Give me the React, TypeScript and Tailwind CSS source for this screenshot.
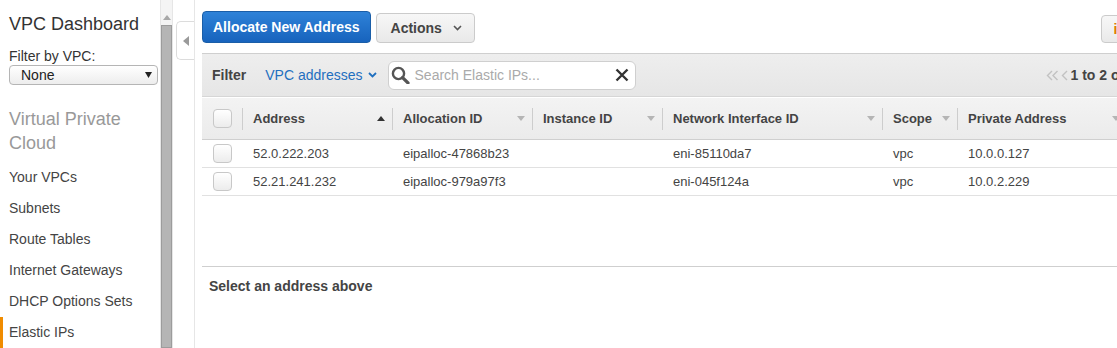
import React from 'react';

const navItems = [
    'Your VPCs',
    'Subnets',
    'Route Tables',
    'Internet Gateways',
    'DHCP Options Sets',
    'Elastic IPs',
];

const columns = [
    {label: 'Address', sorted: true},
    {label: 'Allocation ID'},
    {label: 'Instance ID'},
    {label: 'Network Interface ID'},
    {label: 'Scope'},
    {label: 'Private Address'},
];

const rows = [
    ['52.0.222.203', 'eipalloc-47868b23', '', 'eni-85110da7', 'vpc', '10.0.0.127'],
    ['52.21.241.232', 'eipalloc-979a97f3', '', 'eni-045f124a', 'vpc', '10.0.2.229'],
];

const gridCols = 'grid grid-cols-[40px_150px_140px_130px_220px_75px_170px]';

const Checkbox = () => (
    <div className="h-[19px] w-[19px] rounded-[4px] border border-[#c8c8c8] bg-gradient-to-b from-white to-[#ececec]"/>
);

const SortArrow = ({active}: { active?: boolean }) => (
    <svg width="8" height="5" viewBox="0 0 8 5" className="shrink-0">
        {active
            ? <path d="M0 5 L4 0 L8 5 Z" fill="#333"/>
            : <path d="M0 0 L8 0 L4 5 Z" fill="#b5b5b5"/>}
    </svg>
);

const Sidebar = () => (
    <div className="w-[160px] shrink-0 pt-[13px] text-[#444]">
        <div className="px-[9px] text-[18px] leading-[22px] text-[#333]">VPC Dashboard</div>
        <div className="mt-[12px] px-[9px] text-[14px] leading-[18px] text-[#333]">Filter by VPC:</div>
        <div className="ml-[9px] mr-[2px] flex h-[20px] items-center justify-between rounded-[4px] border border-[#b5b5b5] bg-gradient-to-b from-white to-[#ededed] pl-[11px] pr-[5px] text-[14px] text-[#222]">
            <span>None</span>
            <svg width="7" height="6" viewBox="0 0 7 6">
                <path d="M0 0 L7 0 L3.5 6 Z" fill="#222"/>
            </svg>
        </div>
        <div className="mt-[22px] px-[9px] text-[18px] leading-[24px] text-[#999]">
            Virtual Private<br/>Cloud
        </div>
        <div className="mt-[7px] flex flex-col">
            {navItems.map((item) => (
                <div key={item}
                     className={item === 'Elastic IPs'
                         ? 'h-[31px] border-l-[3px] border-[#f08c00] pl-[6px] text-[14px] leading-[31px]'
                         : 'h-[31px] pl-[9px] text-[14px] leading-[31px]'}>
                    {item}
                </div>
            ))}
        </div>
    </div>
);

const Scrollbar = () => (
    <div className="flex w-[13px] shrink-0 flex-col items-center border-x border-[#e6e6e6] bg-[#f4f4f4]">
        <svg width="8" height="5" viewBox="0 0 8 5" className="mt-[15px]">
            <path d="M0 5 L4 0 L8 5 Z" fill="#a8a8a8"/>
        </svg>
        <div className="mt-[5px] w-[11px] flex-1 border border-[#9c9c9c] bg-[#b5b5b5]"/>
    </div>
);

const CollapseTab = () => (
    <div className="w-[21px] shrink-0 pl-[3px] pt-[21px]">
        <div className="flex h-[39px] w-[18px] items-center justify-center rounded-l-[5px] border border-r-0 border-[#dcdcdc] bg-white">
            <svg width="6" height="10" viewBox="0 0 6 10">
                <path d="M6 0 L6 10 L0 5 Z" fill="#9a9a9a"/>
            </svg>
        </div>
    </div>
);

const Toolbar = () => (
    <div className="flex items-end pt-[11px]">
        <button className="h-[32px] rounded-[4px] border border-[#1a5ea8] bg-gradient-to-b from-[#2e82d8] to-[#1763bd] px-[10px] text-[14px] font-bold text-white">
            Allocate New Address
        </button>
        <button className="ml-[5px] flex h-[30px] w-[99px] items-center rounded-[4px] border border-[#cbcbcb] bg-gradient-to-b from-[#f7f7f7] to-[#e9e9e9] pl-[14px] text-[14px] font-bold text-[#444]">
            Actions
            <svg width="9" height="6" viewBox="0 0 9 6" className="ml-[11px]">
                <path d="M1 1 L4.5 4.5 L8 1" stroke="#555" strokeWidth="1.6" fill="none"/>
            </svg>
        </button>
        <button className="ml-[626px] flex h-[28px] w-[40px] items-center rounded-[4px] border border-[#cbcbcb] bg-gradient-to-b from-[#f7f7f7] to-[#e9e9e9] pl-[12px]">
            <span className="text-[14px] font-bold text-[#e07b00]">i</span>
        </button>
    </div>
);

const FilterBar = () => (
    <div className="mt-[10px] flex h-[44px] items-center border-y border-t-[#cfcfcf] border-b-[#d6d6d6] bg-gradient-to-b from-[#eeeeee] to-[#e6e6e6] pl-[10px] text-[14px]">
        <span className="font-bold text-[#444]">Filter</span>
        <span className="ml-[19px] flex items-center text-[#1f6fbf]">
            VPC addresses
            <svg width="9" height="6" viewBox="0 0 9 6" className="ml-[5px]">
                <path d="M1 1 L4.5 4.5 L8 1" stroke="#1f6fbf" strokeWidth="1.8" fill="none"/>
            </svg>
        </span>
        <div className="ml-[11px] flex h-[29px] w-[248px] items-center rounded-[6px] border border-[#cfcfcf] bg-white pl-[2px] pr-[6px]">
            <svg width="19" height="18" viewBox="0 0 19 18">
                <circle cx="7.5" cy="7.5" r="5.6" stroke="#555" strokeWidth="2.4" fill="none"/>
                <path d="M11.6 11.6 L17 17" stroke="#555" strokeWidth="3.2" strokeLinecap="round"/>
            </svg>
            <span className="ml-[5px] flex-1 text-[#aaa]">Search Elastic IPs...</span>
            <svg width="14" height="14" viewBox="0 0 14 14">
                <path d="M1.5 1.5 L12.5 12.5 M12.5 1.5 L1.5 12.5" stroke="#333" strokeWidth="2.4"/>
            </svg>
        </div>
        <div className="ml-[410px] flex items-center whitespace-nowrap">
            <svg width="13" height="11" viewBox="0 0 13 11">
                <path d="M6 1 L1.5 5.5 L6 10 M11.5 1 L7 5.5 L11.5 10" stroke="#c2c2c2" strokeWidth="1.4" fill="none"/>
            </svg>
            <svg width="8" height="11" viewBox="0 0 8 11" className="ml-[2px]">
                <path d="M6 1 L1.5 5.5 L6 10" stroke="#c2c2c2" strokeWidth="1.4" fill="none"/>
            </svg>
            <span className="ml-[2px] font-bold text-[#444]">1 to 2 of 2</span>
        </div>
    </div>
);

const Table = () => (
    <div className="text-[13px] text-[#444]">
        <div className={`${gridCols} h-[43px] border-t border-b border-t-white border-b-[#cfcfcf] bg-gradient-to-b from-[#f3f3f3] to-[#ebebeb]`}>
            <div className="flex items-center pl-[11px]">
                <Checkbox/>
            </div>
            {columns.map((col) => (
                <div key={col.label} className="flex items-center">
                    <div className="h-[22px] w-px bg-[#cdcdcd]"/>
                    <span className="ml-[10px] flex-1 font-bold">{col.label}</span>
                    <span className="mr-[7px]"><SortArrow active={col.sorted}/></span>
                </div>
            ))}
        </div>
        {rows.map((row) => (
            <div key={row[0]} className={`${gridCols} h-[28px] border-b border-[#e1e1e1]`}>
                <div className="flex items-center pl-[11px]">
                    <Checkbox/>
                </div>
                {row.map((cell, i) => (
                    <div key={i} className="flex items-center pl-[11px] pt-px">{cell}</div>
                ))}
            </div>
        ))}
    </div>
);

export default function App() {
    return (
        <div className="flex h-[348px] w-[1117px] overflow-hidden bg-white font-['Liberation_Sans',Arial,sans-serif]">
            <Sidebar/>
            <Scrollbar/>
            <CollapseTab/>
            <div className="min-w-0 flex-1 overflow-hidden border-l border-[#e6e6e6] pl-[7px]">
                <div className="w-[1000px]">
                    <Toolbar/>
                    <FilterBar/>
                    <Table/>
                    <div className="mt-[70px] h-px bg-[#cfcfcf]"/>
                    <div className="ml-[7px] mt-[10px] text-[14px] font-bold leading-[18px] text-[#444]">
                        Select an address above
                    </div>
                </div>
            </div>
        </div>
    );
}
